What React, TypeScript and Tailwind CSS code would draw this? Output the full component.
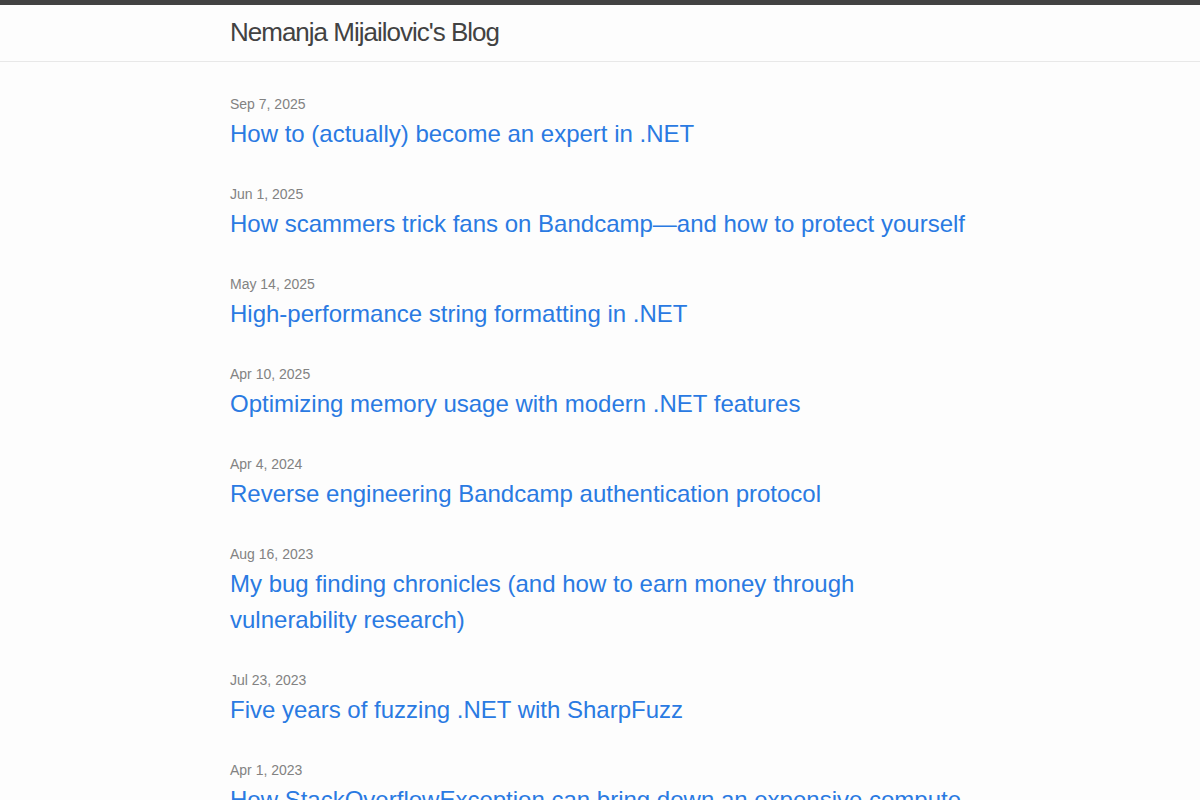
const posts = [
  { date: "Sep 7, 2025", title: "How to (actually) become an expert in .NET" },
  { date: "Jun 1, 2025", title: "How scammers trick fans on Bandcamp—and how to protect yourself" },
  { date: "May 14, 2025", title: "High-performance string formatting in .NET" },
  { date: "Apr 10, 2025", title: "Optimizing memory usage with modern .NET features" },
  { date: "Apr 4, 2024", title: "Reverse engineering Bandcamp authentication protocol" },
  { date: "Aug 16, 2023", title: "My bug finding chronicles (and how to earn money through vulnerability research)" },
  { date: "Jul 23, 2023", title: "Five years of fuzzing .NET with SharpFuzz" },
  { date: "Apr 1, 2023", title: "How StackOverflowException can bring down an expensive compute cluster" },
  { date: "Feb 12, 2023", title: "Fuzzing .NET Core" },
];

export default function App() {
  return (
    <div className="min-h-screen bg-[#fdfdfd] text-[#111111] text-base leading-normal font-['Liberation_Sans',Arial,sans-serif]">
      <header className="border-t-[5px] border-b border-t-[#424242] border-b-[#e8e8e8] min-h-[62px]">
        <div className="max-w-[740px] mx-auto">
          <a href="#" className="block text-[26px] leading-[54px] tracking-[-1px] text-[#424242]">
            Nemanja Mijailovic's Blog
          </a>
        </div>
      </header>

      <main className="py-[30px]">
        <div className="max-w-[740px] mx-auto">
          <ul className="list-none">
            {posts.map((p) => (
              <li key={p.title} className="mb-[30px]">
                <span className="text-sm text-[#828282]">{p.date}</span>
                <h3>
                  <a href="#" className="block text-2xl leading-[36px] text-[#2a7ae2]">
                    {p.title}
                  </a>
                </h3>
              </li>
            ))}
          </ul>
        </div>
      </main>
    </div>
  );
}
